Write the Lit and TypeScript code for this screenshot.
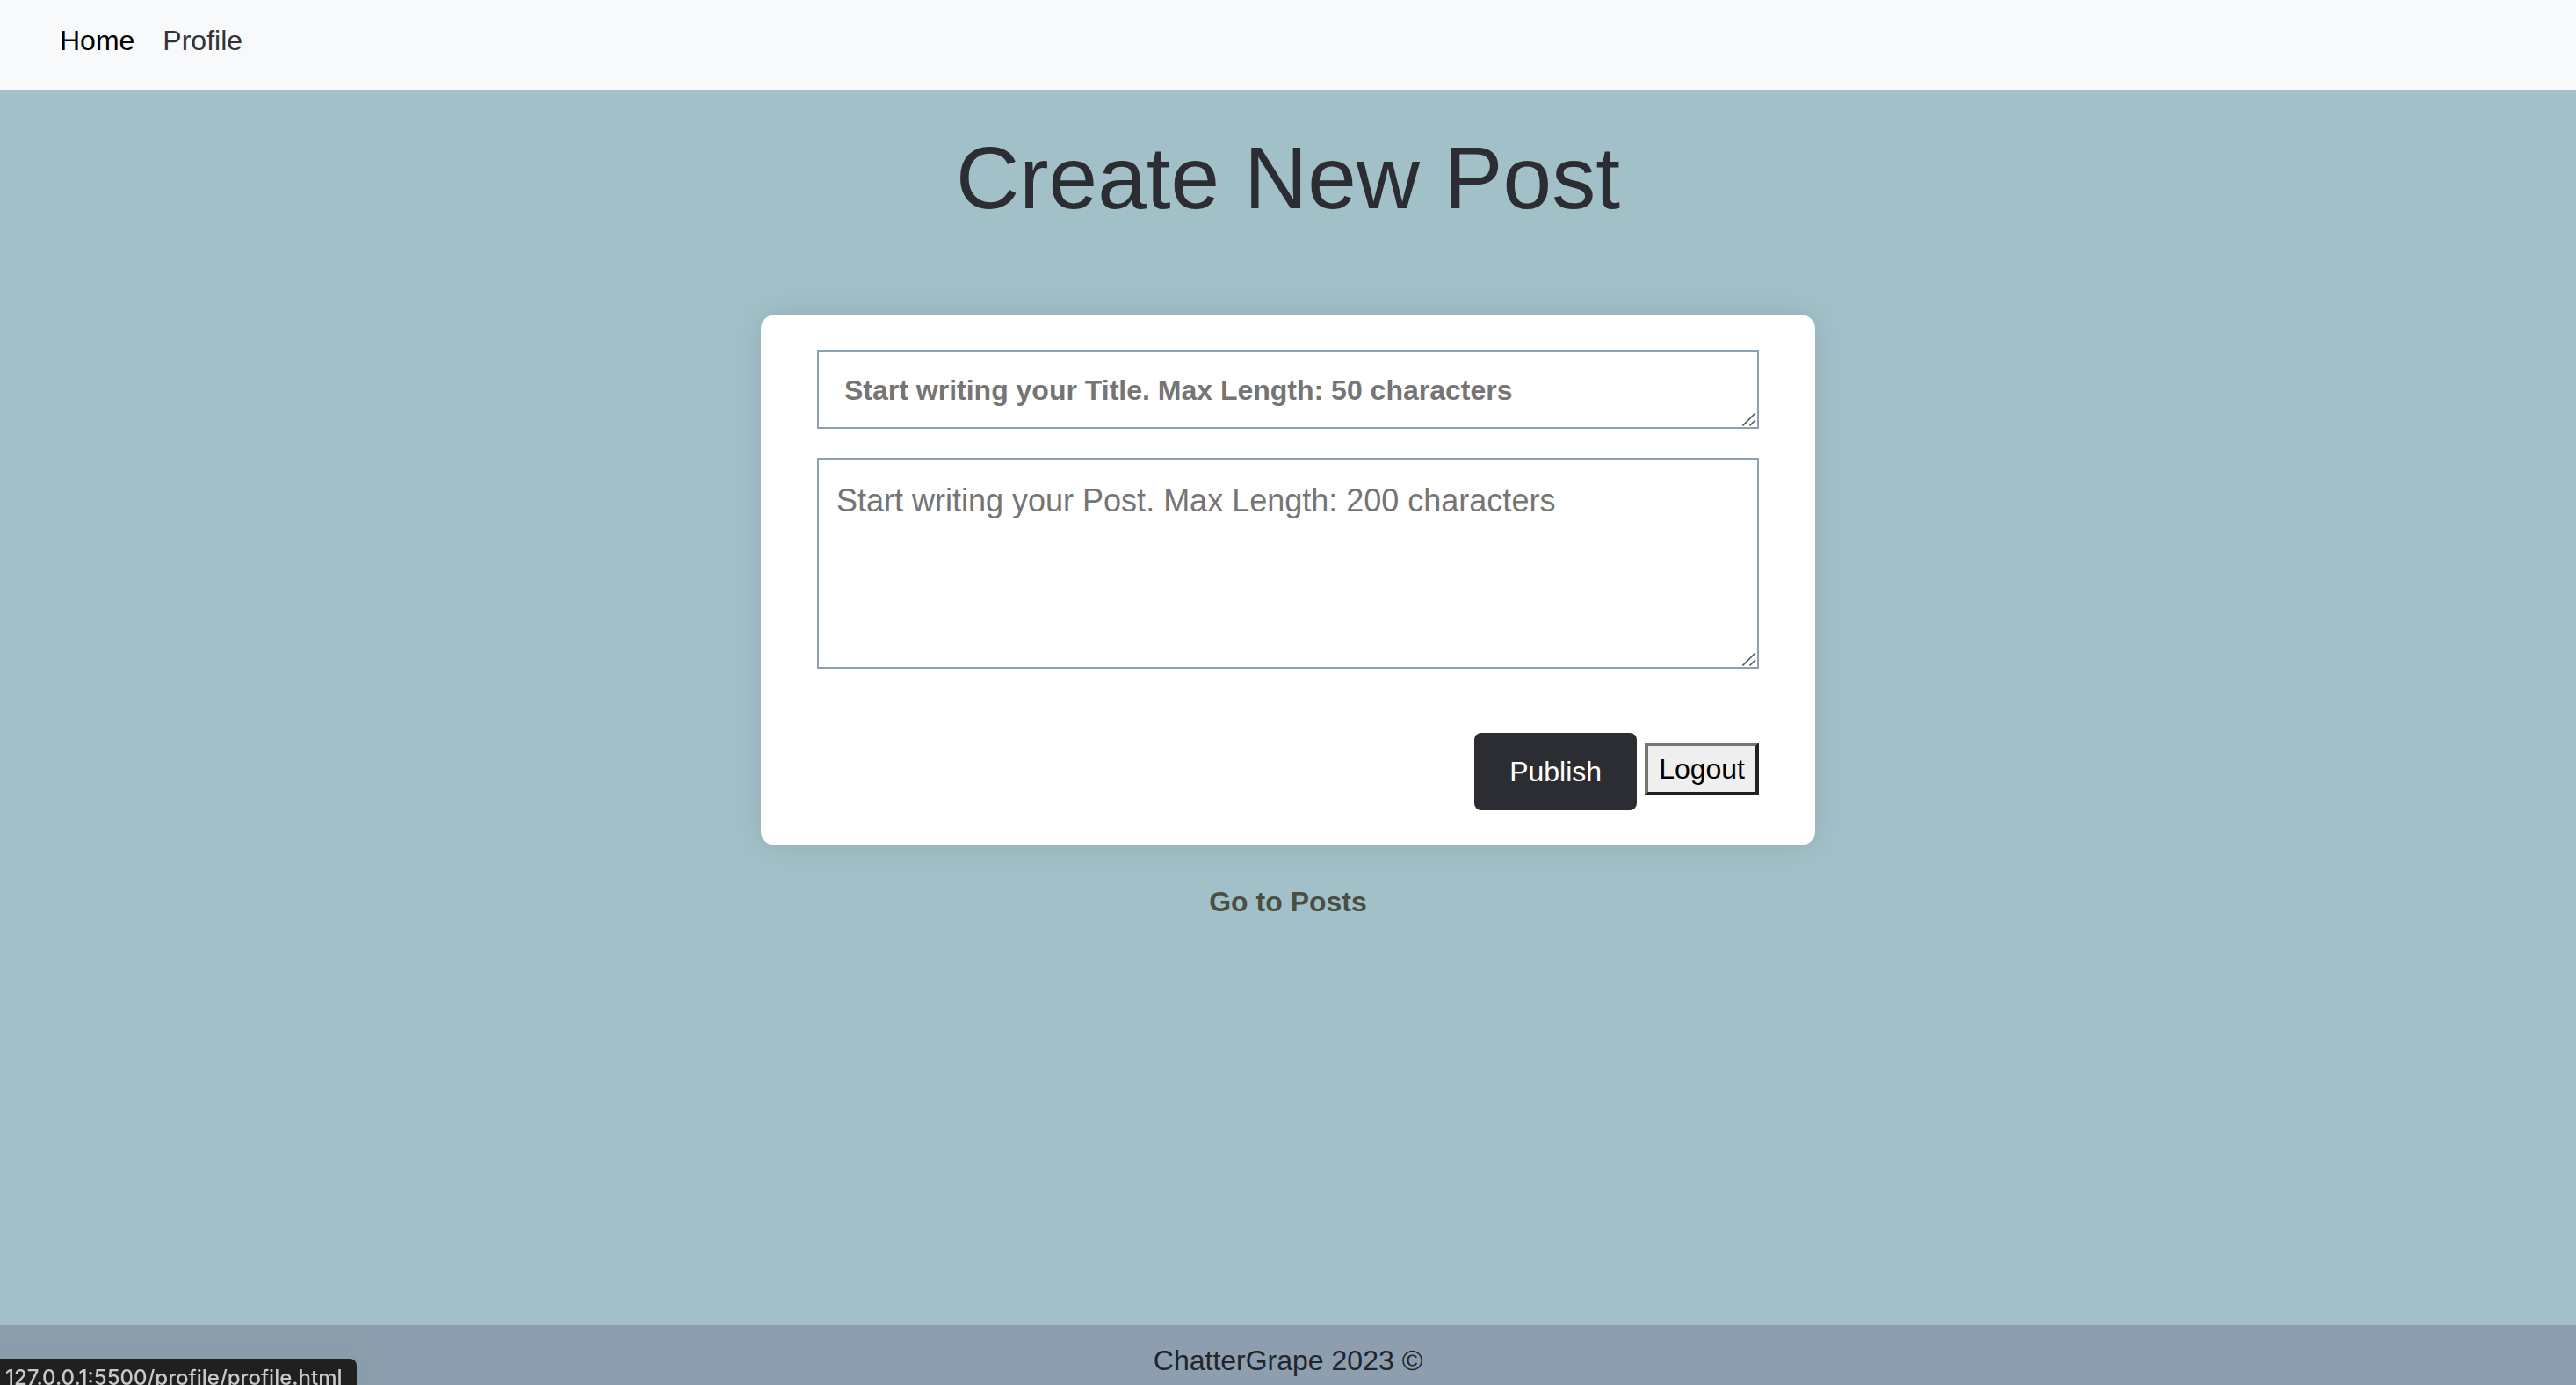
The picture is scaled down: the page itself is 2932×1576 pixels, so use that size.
import { LitElement, html, css } from "lit";
import { customElement } from "lit/decorators.js";

const grip = html`
  <svg class="grip" viewBox="0 0 16 16" aria-hidden="true">
    <path d="M0.5 15.5 L15 1 M8.5 15.5 L15 9" fill="none" stroke="#555" stroke-width="1.6" />
  </svg>
`;

@customElement("app-root")
export class AppRoot extends LitElement {
  static styles = css`
    :host {
      display: flex;
      flex-direction: column;
      min-height: 100vh;
      background: #a2c0c8;
      color: #212529;
      font-family: "Liberation Sans", Arial, sans-serif;
      font-size: 32px;
      line-height: 48px;
    }
    * {
      box-sizing: border-box;
    }
    .nav {
      display: flex;
      gap: 32px;
      padding: 22px 68px 32px;
      background: #f8f9fb;
    }
    .nav-link {
      color: #333;
      text-decoration: none;
    }
    .nav-link.active {
      color: #000;
    }
    .main {
      flex: 1;
      display: flex;
      flex-direction: column;
      align-items: center;
    }
    .heading {
      margin: 40px 0 96px;
      font-size: 100px;
      line-height: 120px;
      font-weight: 400;
      color: #2c2d32;
    }
    .card {
      width: 100%;
      max-width: 1200px;
      display: flex;
      flex-direction: column;
      gap: 33px;
      padding: 40px 64px;
      border-radius: 16px;
      background: #fff;
      box-shadow: 0 0 32px rgba(0, 0, 0, 0.1);
    }
    .field {
      position: relative;
      display: flex;
    }
    .input {
      width: 100%;
      margin: 0;
      border: 2px solid #8d9fb1;
      border-radius: 0;
      background: #fff;
      color: #212529;
      font-family: inherit;
      resize: none;
      overflow: hidden;
    }
    .input::placeholder {
      color: #757575;
      opacity: 1;
    }
    .title-input {
      height: 90px;
      padding: 20px 29px;
      font-size: 32px;
      line-height: 48px;
      font-weight: 700;
    }
    .post-input {
      height: 240px;
      padding: 20px;
      font-size: 36px;
      line-height: 54px;
    }
    .grip {
      position: absolute;
      right: 3px;
      bottom: 3px;
      width: 16px;
      height: 16px;
      pointer-events: none;
    }
    .actions {
      display: flex;
      justify-content: flex-end;
      align-items: center;
      gap: 9px;
      margin-top: 40px;
    }
    .publish {
      padding: 20px 40px;
      border: 0;
      border-radius: 8px;
      background: #2c2d32;
      color: #fff;
      font: inherit;
    }
    .logout {
      margin: 0 0 6px;
      padding: 2px 12px;
      border: 4px solid;
      border-color: #767676 #212121 #212121 #767676;
      background: #efefef;
      color: #000;
      font: inherit;
    }
    .posts-link {
      margin-top: 40px;
      color: #4b4f42;
      font-weight: 700;
      text-decoration: none;
    }
    .footer {
      padding: 16px 16px 4px;
      background: #8d9eae;
      text-align: center;
    }
    .status {
      position: fixed;
      left: 0;
      bottom: 0;
      height: 30px;
      padding: 6px 16px 0 6px;
      border-top-right-radius: 8px;
      background: #1f2120;
      box-shadow: 0 0 32px rgba(120, 150, 140, 0.4);
      color: #c9c9c9;
      font-family: Inter, Roboto, sans-serif;
      font-size: 24px;
      font-weight: 500;
      line-height: 32px;
      white-space: nowrap;
    }
  `;

  render() {
    return html`
      <nav class="nav">
        <a class="nav-link active" href="#home">Home</a>
        <a class="nav-link" href="#profile">Profile</a>
      </nav>
      <main class="main">
        <h1 class="heading">Create New Post</h1>
        <form class="card" @submit=${(e: Event) => e.preventDefault()}>
          <div class="field">
            <textarea
              class="input title-input"
              aria-label="Title"
              maxlength="50"
              placeholder="Start writing your Title. Max Length: 50 characters"
            ></textarea>
            ${grip}
          </div>
          <div class="field">
            <textarea
              class="input post-input"
              aria-label="Post"
              maxlength="200"
              placeholder="Start writing your Post. Max Length: 200 characters"
            ></textarea>
            ${grip}
          </div>
          <div class="actions">
            <button class="publish" type="submit">Publish</button>
            <button class="logout" type="button">Logout</button>
          </div>
        </form>
        <a class="posts-link" href="#posts">Go to Posts</a>
      </main>
      <footer class="footer">ChatterGrape 2023 ©</footer>
      <div class="status">127.0.0.1:5500/profile/profile.html</div>
    `;
  }
}
